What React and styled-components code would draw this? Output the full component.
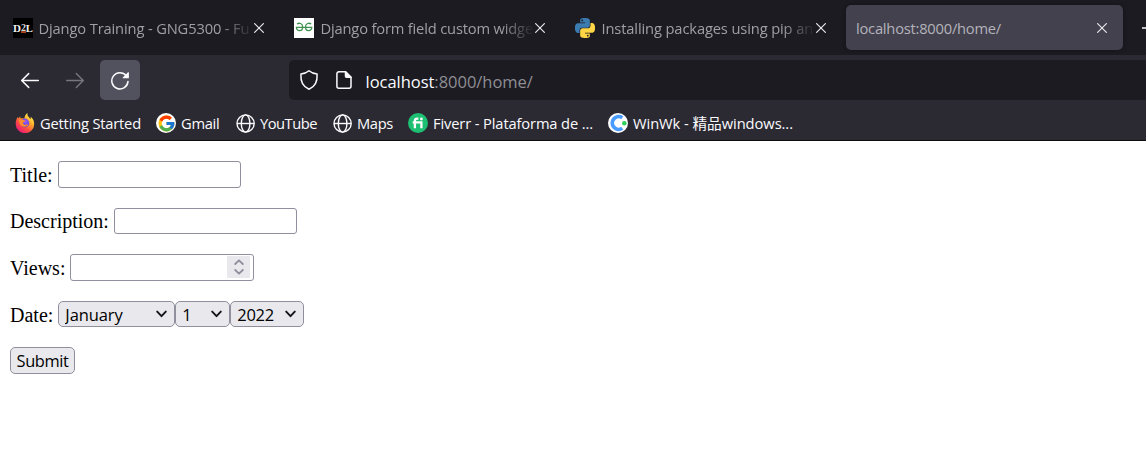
import React from "react";
import styled, { createGlobalStyle } from "styled-components";
import { FcGoogle } from "react-icons/fc";

const GlobalStyle = createGlobalStyle`
  * { box-sizing: border-box; }
  html, body { margin: 0; padding: 0; background: #fff; overflow: hidden; }
`;

const uiFont = `"Open Sans", "Noto Sans CJK SC", sans-serif`;

const Browser = styled.div`
  height: 452px;
  display: flex;
  flex-direction: column;
  overflow: hidden;
  background: #fff;
`;

const TabStrip = styled.div`
  flex: none;
  height: 55px;
  display: flex;
  gap: 4px;
  padding: 5px 0 5px 3px;
  background: #1c1b22;
  overflow: hidden;
`;

const Tab = styled.div`
  flex: none;
  width: 277px;
  height: 45px;
  display: flex;
  align-items: center;
  padding: 0 16px 0 10px;
  border-radius: 5px;
  background: ${(p) => (p.$active ? "#42414d" : "transparent")};
  box-shadow: ${(p) => (p.$active ? "0 0 4px rgba(0, 0, 0, 0.4)" : "none")};

  > svg { flex: none; }
`;

const TabTitle = styled.span`
  flex: 1;
  min-width: 0;
  margin-left: ${(p) => p.$gap}px;
  font: 14.7px/20px ${uiFont};
  letter-spacing: ${(p) => p.$spacing}px;
  color: ${(p) => (p.$active ? "#b4b3bb" : "#a09fa5")};
  white-space: nowrap;
  mask-image: ${(p) => (p.$active ? "none" : "linear-gradient(to left, transparent, #000 34px)")};
`;

const NewTab = styled.div`
  flex: none;
  display: flex;
  align-items: center;
  margin-left: 15px;
`;

const NavBar = styled.div`
  flex: none;
  height: 50px;
  display: flex;
  align-items: center;
  padding: 0 0 0 10px;
  gap: 5px;
  background: #2b2a33;
`;

const NavButton = styled.button`
  width: 40px;
  height: 40px;
  display: grid;
  place-items: center;
  padding: 0;
  border: 0;
  border-radius: 5px;
  color: ${(p) => (p.$dim ? "#77767d" : "#fbfbfe")};
  background: ${(p) => (p.$hover ? "#52525e" : "transparent")};
`;

const AddressBar = styled.div`
  flex: 1;
  height: 40px;
  margin-left: 144px;
  display: flex;
  align-items: center;
  padding-left: 10px;
  border-radius: 5px 0 0 5px;
  background: #1c1b22;
`;

const PageButton = styled.span`
  display: flex;
  margin-left: 15px;
`;

const Url = styled.span`
  margin-left: 11.5px;
  padding-top: 4px;
  font: 16.5px/22px ${uiFont};
  letter-spacing: -0.03px;
  color: #8f8e94;
  white-space: nowrap;
`;

const Host = styled.span`
  color: #fbfbfe;
`;

const BookmarkBar = styled.div`
  flex: none;
  height: 36px;
  display: flex;
  align-items: flex-start;
  padding: 8px 0 0 15px;
  background: #2b2a33;
  border-bottom: 1px solid #0c0c0d;
`;

const Bookmark = styled.div`
  flex: none;
  width: ${(p) => p.$width}px;
  height: 20px;
  display: flex;
  align-items: center;
  gap: ${(p) => p.$gap || 5}px;
  font: 14.7px/20px ${uiFont};
  letter-spacing: ${(p) => p.$spacing}px;
  color: #fbfbfe;
  white-space: nowrap;

  > svg { flex: none; }
`;

const GoogleBadge = styled.span`
  flex: none;
  width: 20px;
  height: 20px;
  display: grid;
  place-items: center;
  border-radius: 50%;
  background: #fff;
`;

const Form = styled.form`
  display: flex;
  flex-direction: column;
  align-items: flex-start;
  gap: 20px;
  padding: 20px 10px;
`;

const FormRow = styled.div`
  display: flex;
  align-items: center;
  height: 26.6px;
  font: 20px/23px "Liberation Serif", serif;
  color: #000;
`;

const FieldLabel = styled.label`
  margin-right: 5px;
  padding-top: 2px;
`;

const TextInput = styled.input`
  width: 183px;
  height: 100%;
  padding: 0 4px;
  border: 1px solid #8f8f9d;
  border-radius: 3px;
  background: #fff;
  outline: none;
  appearance: none;
`;

const NumberField = styled.span`
  width: 184px;
  height: 100%;
  display: flex;
  align-items: center;
  justify-content: flex-end;
  padding-right: 3px;
  border: 1px solid #8f8f9d;
  border-radius: 3px;
`;

const NumberInput = styled.input`
  flex: 1;
  min-width: 0;
  height: 100%;
  border: 0;
  padding: 0 4px;
  background: transparent;
  outline: none;
`;

const Spinner = styled.span`
  width: 23px;
  height: 22px;
  display: grid;
  place-items: center;
  background: #e9e9ed;
`;

const SelectBox = styled.span`
  width: ${(p) => p.$width}px;
  height: 100%;
  display: flex;
  align-items: center;
  justify-content: space-between;
  padding: 0 7px 0 6px;
  border: 1px solid #8f8f9d;
  border-radius: 5px;
  background: #e9e9ed;
`;

const Select = styled.select`
  flex: 1;
  min-width: 0;
  padding: 2px 0 0;
  border: 0;
  background: transparent;
  appearance: none;
  font: 16.5px/22px ${uiFont};
  letter-spacing: ${(p) => p.$spacing}px;
  color: #000;
`;

const SubmitButton = styled.button`
  width: 65px;
  height: 26.6px;
  padding: 0;
  border: 1px solid #8f8f9d;
  border-radius: 5px;
  background: #e9e9ed;
  font: 16.4px/22px ${uiFont};
  letter-spacing: -0.4px;
  color: #000;
  white-space: nowrap;
`;

const CloseIcon = () => (
  <svg width="10" height="10" viewBox="0 0 10 10" stroke="#e6e6ea" strokeWidth="1.2" strokeLinecap="round">
    <path d="M.6.6l8.8 8.8M9.4.6L.6 9.4" />
  </svg>
);

const D2LIcon = () => (
  <svg width="20" height="20" viewBox="0 0 20 20">
    <rect width="20" height="20" fill="#000" />
    <g fill="#f2f2f2" fontFamily="Liberation Serif, serif" fontWeight="bold">
      <text x="0" y="13.7" fontSize="11">D</text>
      <text x="8" y="12.8" fontSize="10" fill="#d6d6d6">2</text>
      <text x="12.7" y="13.7" fontSize="10.6">L</text>
    </g>
    <rect x="8" y="13.3" width="5" height="1.5" fill="#d9581f" />
  </svg>
);

const GeeksIcon = () => (
  <svg width="20" height="20" viewBox="0 0 20 20">
    <rect width="20" height="20" fill="#fff" />
    <path d="M3 6C5 4.500 8.700 5.200 8.700 8.900c0 4.800-6.300 4.900-6.300.4h15.400c0 4.500-6.300 4.400-6.300-.4 0-3.700 3.700-4.400 5.700-2.900" fill="none" stroke="#3f9050" strokeWidth="1.300" />
  </svg>
);

const pythonHalf =
  "M14.25.18l.9.2.73.26.59.3.45.32.34.34.25.34.16.33.1.3.04.26.02.2-.01.13V8.5l-.05.63-.13.55-.21.46-.26.38-.3.31-.33.25-.35.19-.35.14-.33.1-.3.07-.26.04-.21.02H8.77l-.69.05-.59.14-.5.22-.41.27-.33.32-.27.35-.2.36-.15.37-.1.35-.07.32-.04.27-.02.21v3.06H3.17l-.21-.03-.28-.07-.32-.12-.35-.18-.36-.26-.36-.36-.35-.46-.32-.59-.28-.73-.21-.88-.14-1.05-.05-1.23.06-1.22.16-1.04.24-.87.32-.71.36-.57.4-.44.42-.33.42-.24.4-.16.36-.1.32-.05.24-.01h.16l.06.01h8.16v-.83H6.18l-.01-2.75-.02-.37.05-.34.11-.31.17-.28.25-.26.31-.23.38-.2.44-.18.51-.15.58-.12.64-.1.71-.06.77-.04.84-.02 1.27.05zm-6.3 1.98l-.23.33-.08.41.08.41.23.34.33.22.41.09.41-.09.33-.22.23-.34.08-.41-.08-.41-.23-.33-.33-.22-.41-.09-.41.09z";

const PythonIcon = () => (
  <svg width="20" height="20" viewBox="0 0 24 24">
    <path d={pythonHalf} fill="#3b7cb0" />
    <path d={pythonHalf} fill="#ffd545" transform="rotate(180 12 12)" />
  </svg>
);

const BackIcon = () => (
  <svg width="20" height="20" viewBox="0 0 20 20" fill="none" stroke="currentColor" strokeWidth="1.5" strokeLinecap="round" strokeLinejoin="round">
    <path d="M18.3 10.5H1.8M8.7 3.6l-7 6.9 7 6.9" />
  </svg>
);

const ForwardIcon = () => (
  <svg width="20" height="20" viewBox="0 0 20 20" fill="none" stroke="currentColor" strokeWidth="1.4" strokeLinecap="round" strokeLinejoin="round">
    <path d="M1.7 10.5h16.5M11.3 3.6l7 6.9-7 6.9" />
  </svg>
);

const ReloadIcon = () => (
  <svg width="20" height="20" viewBox="0 0 20 20" fill="none" stroke="currentColor" strokeWidth="1.5" strokeLinecap="round">
    <path d="M16.2 5.7A8.1 8.1 0 1 0 18 11.4" />
    <path d="M18.9 2.6v5.1a.6.6 0 0 1-.6.6h-5.1c-.5 0-.7-.5-.4-.9l5.2-5.1c.3-.3.9-.2.9.3z" fill="currentColor" stroke="none" />
  </svg>
);

const ShieldIcon = () => (
  <svg width="20" height="22" viewBox="0 0 20 22" fill="none" stroke="#fbfbfe" strokeWidth="1.5" strokeLinejoin="round">
    <path d="M10 1.8c2.3 2 5.2 3 8.1 3.3.4 6.5-1.3 12.4-8.1 15.1C3.2 17.5 1.5 11.6 1.9 5.1 4.8 4.8 7.7 3.8 10 1.8z" />
  </svg>
);

const PageIcon = () => (
  <svg width="20" height="20" viewBox="0 0 20 20" fill="none" stroke="#fbfbfe" strokeWidth="1.5" strokeLinejoin="round">
    <path d="M4.9 1.8h6.6l5.5 5.5v9a2 2 0 0 1-2 2H4.9a2 2 0 0 1-2-2V3.8a2 2 0 0 1 2-2z" />
    <path d="M11.5 1.8v4.500a1 1 0 0 0 1 1H17z" fill="#fbfbfe" />
  </svg>
);

const GlobeIcon = () => (
  <svg width="20" height="20" viewBox="0 0 20 20" fill="none" stroke="#fbfbfe" strokeWidth="1.4">
    <circle cx="9.6" cy="10.5" r="8.6" />
    <ellipse cx="9.6" cy="10.5" rx="4.3" ry="8.6" />
    <path d="M1 10.5h17.2" />
  </svg>
);

const FirefoxIcon = () => (
  <svg width="20" height="20" viewBox="0 0 20 20">
    <defs>
      <linearGradient id="ffFlame" x1=".85" y1=".1" x2=".2" y2=".95">
        <stop offset="0" stopColor="#fff44f" />
        <stop offset=".35" stopColor="#ffa52a" />
        <stop offset=".65" stopColor="#ff4f3f" />
        <stop offset="1" stopColor="#e8187c" />
      </linearGradient>
      <radialGradient id="ffGlobe" cx=".6" cy=".35" r=".75">
        <stop offset="0" stopColor="#9059ff" />
        <stop offset="1" stopColor="#5b3bc4" />
      </radialGradient>
    </defs>
    <path d="M12.6 0c-.5 2 .1 3 1.4 4.3l1.9 1.9c-.1-1.2-.2-1.9-.1-2.4 2 1.6 3.4 4.2 3.4 7.1a9.2 9.2 0 0 1-18.5 0c0-2.6.6-5.2 2.4-7.2-.1.7 0 1.2.2 1.8.5-.8 1.2-1.5 2-2-.1.9.1 1.5.6 2 1.5-.3 2.5 0 3.4.2C9.4 3.7 10.5 1.2 12.6 0z" fill="url(#ffFlame)" />
    <circle cx="9.9" cy="10" r="4.4" fill="url(#ffGlobe)" />
    <path d="M3.7 7.2c1.6-.9 3.6-.9 5.3.1l1.6.2c-.3 1.1-1.9 1.3-2.5 2.1-.3 1.5 1 2.3 2.3 2.3 1.2 0 1.9-.7 2.7-.5-1.2 3-6.8 3.3-8.3-.4-.5-1.3-.8-2.6-1.1-3.8z" fill="#ff8a2b" />
  </svg>
);

const FiverrIcon = () => (
  <svg width="20" height="20" viewBox="0 0 20 20">
    <circle cx="10" cy="10" r="10" fill="#1dbf73" />
    <g fill="none" stroke="#fff" strokeWidth="2.3">
      <path d="M6.9 15.2V7.8c0-1.5.8-2.1 2.3-2.1h1.2M4.7 9.3h8.7v5.9" />
    </g>
    <circle cx="13.4" cy="6" r="1.4" fill="#fff" />
  </svg>
);

const WinWkIcon = () => (
  <svg width="20" height="20" viewBox="0 0 20 20">
    <circle cx="10" cy="10" r="10" fill="#fff" />
    <path d="M14.3 4.7a6.4 6.4 0 1 0 0 10.6" fill="none" stroke="#4a9bff" strokeWidth="3.8" />
    <circle cx="16.3" cy="10.2" r="2.3" fill="#2fd159" />
  </svg>
);

const SelectArrow = () => (
  <svg width="11" height="8" viewBox="0 0 11 8" fill="none" stroke="#15141a" strokeWidth="1.9" strokeLinecap="round" strokeLinejoin="round">
    <path d="M1.2 1.6l4.3 4.6 4.3-4.6" />
  </svg>
);

const tabs = [
  { title: "Django Training - GNG5300 - Fu", icon: <D2LIcon />, gap: 5.5, spacing: -0.14 },
  { title: "Django form field custom widge", icon: <GeeksIcon />, gap: 6.5, spacing: -0.17 },
  { title: "Installing packages using pip an", icon: <PythonIcon />, gap: 6.5, spacing: -0.13 },
  { title: "localhost:8000/home/", active: true, gap: 0, spacing: -0.22 },
];

const bookmarks = [
  { title: "Getting Started", icon: <FirefoxIcon />, width: 141, spacing: -0.19 },
  { title: "Gmail", icon: <GoogleBadge><FcGoogle size={19} /></GoogleBadge>, width: 80, spacing: -0.3 },
  { title: "YouTube", icon: <GlobeIcon />, width: 97, spacing: -0.5, gap: 4 },
  { title: "Maps", icon: <GlobeIcon />, width: 75, spacing: -0.35, gap: 4 },
  { title: "Fiverr - Plataforma de ...", icon: <FiverrIcon />, width: 200, spacing: -0.13 },
  { title: "WinWk - 精品windows...", icon: <WinWkIcon />, width: 190, spacing: -0.06 },
];

const dateParts = [
  { value: "January", width: 117, spacing: -0.1 },
  { value: "1", width: 55, spacing: 0 },
  { value: "2022", width: 74, spacing: -0.3 },
];

export default function App() {
  return (
    <Browser>
      <GlobalStyle />
      <TabStrip>
        {tabs.map((tab) => (
          <Tab key={tab.title} $active={tab.active}>
            {tab.icon}
            <TabTitle $active={tab.active} $gap={tab.gap} $spacing={tab.spacing}>{tab.title}</TabTitle>
            <CloseIcon />
          </Tab>
        ))}
        <NewTab>
          <svg width="18" height="18" viewBox="0 0 18 18" stroke="#fbfbfe" strokeWidth="1.5">
            <path d="M0 9h18M9 0v18" />
          </svg>
        </NewTab>
      </TabStrip>
      <NavBar>
        <NavButton><BackIcon /></NavButton>
        <NavButton $dim><ForwardIcon /></NavButton>
        <NavButton $hover><ReloadIcon /></NavButton>
        <AddressBar>
          <ShieldIcon />
          <PageButton><PageIcon /></PageButton>
          <Url><Host>localhost</Host>:8000/home/</Url>
        </AddressBar>
      </NavBar>
      <BookmarkBar>
        {bookmarks.map((b) => (
          <Bookmark key={b.title} $width={b.width} $spacing={b.spacing} $gap={b.gap}>
            {b.icon}
            <span>{b.title}</span>
          </Bookmark>
        ))}
      </BookmarkBar>
      <Form>
        <FormRow>
          <FieldLabel>Title:</FieldLabel>
          <TextInput />
        </FormRow>
        <FormRow>
          <FieldLabel>Description:</FieldLabel>
          <TextInput />
        </FormRow>
        <FormRow>
          <FieldLabel>Views:</FieldLabel>
          <NumberField>
            <NumberInput />
            <Spinner>
              <svg width="10" height="16" viewBox="0 0 10 16" fill="none" stroke="#8f8f9d" strokeWidth="1.8" strokeLinecap="round" strokeLinejoin="round">
                <path d="M1.2 5L5 1.3 8.8 5M1.2 11L5 14.7 8.8 11" />
              </svg>
            </Spinner>
          </NumberField>
        </FormRow>
        <FormRow>
          <FieldLabel>Date:</FieldLabel>
          {dateParts.map((part) => (
            <SelectBox key={part.value} $width={part.width}>
              <Select $spacing={part.spacing}><option>{part.value}</option></Select>
              <SelectArrow />
            </SelectBox>
          ))}
        </FormRow>
        <SubmitButton type="button">Submit</SubmitButton>
      </Form>
    </Browser>
  );
}
